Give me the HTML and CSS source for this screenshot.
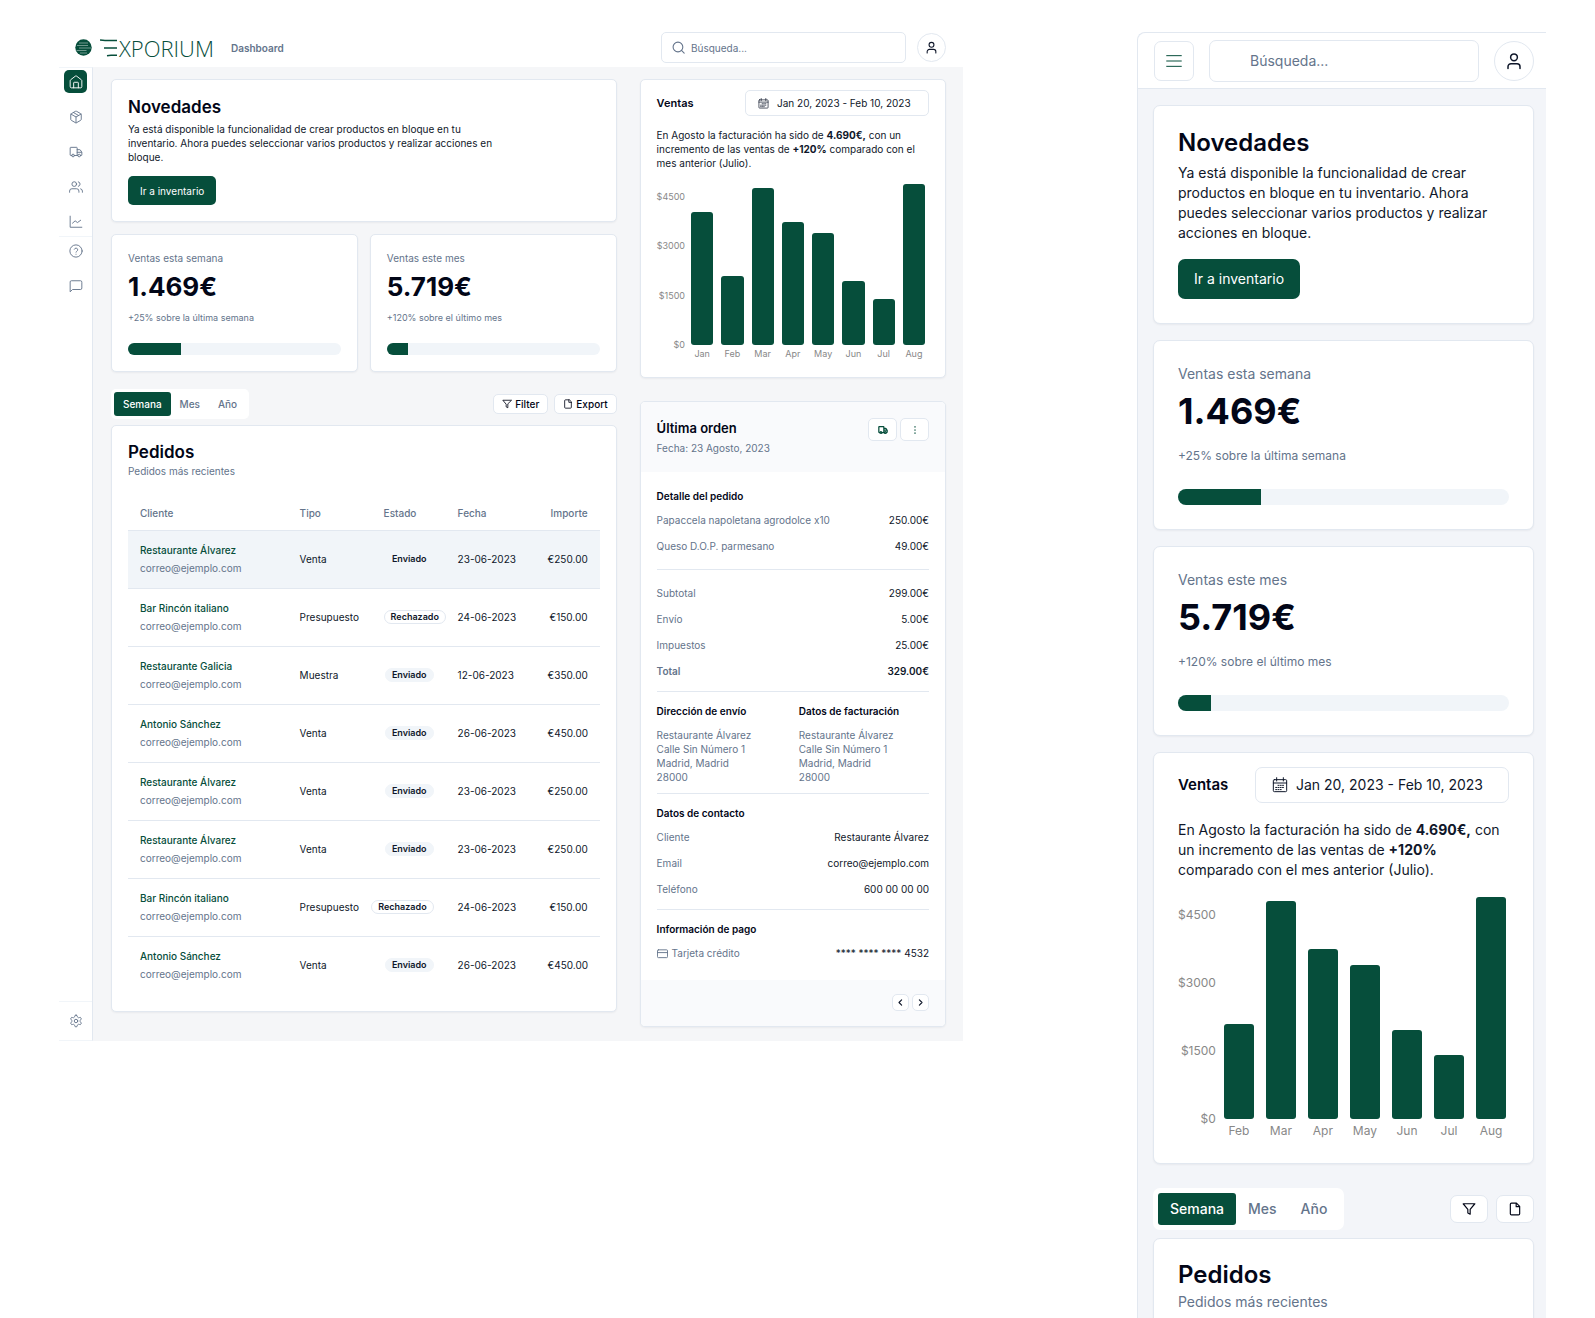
FILE: index.html
```html
<!DOCTYPE html>
<html lang="es">
<head>
<meta charset="utf-8">
<meta name="viewport" content="width=device-width, initial-scale=1">
<title>Exporium – Dashboard</title>
<link rel="stylesheet" href="styles.css">
</head>
<body>
<svg class="sprite" aria-hidden="true">
  <symbol id="i-home" viewBox="0 0 24 24"><path d="M2 9.800a2 2 0 0 1 .8-1.600l8-6.200a2 2 0 0 1 2.400 0l8 6.200a2 2 0 0 1 .8 1.600V20a2 2 0 0 1-2 2H4a2 2 0 0 1-2-2z"/><path d="M8 22v-8.500a1 1 0 0 1 1-1h6a1 1 0 0 1 1 1V22"/></symbol>
  <symbol id="i-box" viewBox="0 0 24 24"><path d="M21 8a2 2 0 0 0-1-1.730l-7-4a2 2 0 0 0-2 0l-7 4A2 2 0 0 0 3 8v8a2 2 0 0 0 1 1.730l7 4a2 2 0 0 0 2 0l7-4A2 2 0 0 0 21 16z"/><path d="M3.300 7 12 12l8.700-5M12 22V12M7.500 4.270l9 5.150"/></symbol>
  <symbol id="i-truck" viewBox="0 0 24 24"><path d="M5 18H3a1 1 0 0 1-1-1V5a1 1 0 0 1 1-1h10a1 1 0 0 1 1 1v12M14 8h4.500a1 1 0 0 1 .8.4l2.500 3.700a1 1 0 0 1 .2.600V17a1 1 0 0 1-1 1h-1M9.500 18h5.500M14 12.500h7.500"/><circle cx="7" cy="18" r="2.300"/><circle cx="17.500" cy="18" r="2.300"/></symbol>
  <symbol id="i-users" viewBox="0 0 24 24"><path d="M17 21v-2a4 4 0 0 0-4-4H5a4 4 0 0 0-4 4v2M23 21v-2a4 4 0 0 0-3-3.870M16 3.130a4 4 0 0 1 0 7.750"/><circle cx="9" cy="7" r="4"/></symbol>
  <symbol id="i-chart" viewBox="0 0 24 24"><path d="M2 2v19h20M6 14l4.500-4 4 3 5.500-4"/></symbol>
  <symbol id="i-help" viewBox="0 0 24 24"><circle cx="12" cy="12" r="10.500"/><path d="M9.100 9a3 3 0 0 1 5.800 1c0 2-2.900 2.600-2.900 4M12 17.500v.1"/></symbol>
  <symbol id="i-chat" viewBox="0 0 24 24"><path d="M22 16a2 2 0 0 1-2 2H6l-4 4V5a2 2 0 0 1 2-2h16a2 2 0 0 1 2 2z"/></symbol>
  <symbol id="i-gear" viewBox="0 0 24 24"><path d="M12.220 2h-.44a2 2 0 0 0-2 2v.18a2 2 0 0 1-1 1.730l-.43.25a2 2 0 0 1-2 0l-.15-.08a2 2 0 0 0-2.730.73l-.22.38a2 2 0 0 0 .73 2.730l.15.1a2 2 0 0 1 1 1.720v.51a2 2 0 0 1-1 1.740l-.15.09a2 2 0 0 0-.73 2.730l.22.38a2 2 0 0 0 2.730.73l.15-.08a2 2 0 0 1 2 0l.43.25a2 2 0 0 1 1 1.730V20a2 2 0 0 0 2 2h.44a2 2 0 0 0 2-2v-.18a2 2 0 0 1 1-1.730l.43-.25a2 2 0 0 1 2 0l.15.08a2 2 0 0 0 2.730-.73l.22-.39a2 2 0 0 0-.73-2.730l-.15-.08a2 2 0 0 1-1-1.740v-.5a2 2 0 0 1 1-1.740l.15-.09a2 2 0 0 0 .73-2.730l-.22-.38a2 2 0 0 0-2.730-.73l-.15.08a2 2 0 0 1-2 0l-.43-.25a2 2 0 0 1-1-1.730V4a2 2 0 0 0-2-2z"/><circle cx="12" cy="12" r="3"/></symbol>
  <symbol id="i-search" viewBox="0 0 24 24"><circle cx="11" cy="11" r="9"/><path d="m22.500 22.500-5-5"/></symbol>
  <symbol id="i-user" viewBox="0 0 24 24"><circle cx="12" cy="7" r="4.500"/><path d="M4 22v-2.500a4 4 0 0 1 4-4h8a4 4 0 0 1 4 4V22"/></symbol>
  <symbol id="i-calendar" viewBox="0 0 24 24"><rect x="2" y="4" width="20" height="18" rx="1.500"/><path d="M2 9h20M7 1v5M17 1v5"/><path stroke-dasharray="1.500 1.900" d="M9 12.500h10M5.500 15.700h13.500M5.500 18.900h10"/></symbol>
  <symbol id="i-filter" viewBox="0 0 24 24"><path d="M22 3H2l8 9.500V19l4 2v-8.500z"/></symbol>
  <symbol id="i-file" viewBox="0 0 24 24"><path d="M14.500 2H6a2 2 0 0 0-2 2v16a2 2 0 0 0 2 2h12a2 2 0 0 0 2-2V7.500zM14 2v6h6"/></symbol>
  <symbol id="i-dots" viewBox="0 0 24 24"><path d="M12 4v1M12 11.500v1M12 19v1"/></symbol>
  <symbol id="i-card" viewBox="0 0 24 24"><rect x="1" y="4" width="22" height="17" rx="2"/><path d="M1 10h22"/></symbol>
  <symbol id="i-left" viewBox="0 0 24 24"><path d="m15 5-7 7 7 7"/></symbol>
  <symbol id="i-right" viewBox="0 0 24 24"><path d="m9 5 7 7-7 7"/></symbol>
  <symbol id="i-menu" viewBox="0 0 24 24"><path d="M1 4h22M1 12h22M1 20h22"/></symbol>
</svg>

<div class="desktop">
  <header class="topbar">
    <a class="brand" href="#" aria-label="Exporium">
      <svg class="brand-globe" viewBox="0 0 17 17" aria-hidden="true"><circle cx="8.500" cy="8.500" r="8.200" fill="#064e3b"/><path d="M4 4h9M2 6.500h11M4 9h12M1.500 11.500h10M5 14h7" stroke="#9dbab1" stroke-width=".7" fill="none"/></svg>
      <svg class="brand-bars" viewBox="0 0 17 18" aria-hidden="true"><path d="M0 1q3 .5 5 .5h12M4 9h13M7 16.700q2-.4 4-.4h6" fill="none" stroke="#064e3b" stroke-width="1.400"/></svg>
      <span class="brand-name">XPORIUM</span>
    </a>
    <span class="page-name">Dashboard</span>
    <label class="search">
      <svg class="icon"><use href="#i-search"/></svg>
      <input type="search" placeholder="Búsqueda..." aria-label="Búsqueda">
    </label>
    <button class="avatar" aria-label="Cuenta"><svg class="icon"><use href="#i-user"/></svg></button>
  </header>

  <div class="shell">
    <nav class="sidebar" aria-label="Principal">
      <div class="nav-group">
        <a class="nav-item active" href="#" aria-label="Inicio"><svg class="icon"><use href="#i-home"/></svg></a>
        <a class="nav-item" href="#" aria-label="Inventario"><svg class="icon"><use href="#i-box"/></svg></a>
        <a class="nav-item" href="#" aria-label="Envíos"><svg class="icon"><use href="#i-truck"/></svg></a>
        <a class="nav-item" href="#" aria-label="Clientes"><svg class="icon"><use href="#i-users"/></svg></a>
        <a class="nav-item" href="#" aria-label="Informes"><svg class="icon"><use href="#i-chart"/></svg></a>
      </div>
      <div class="nav-group">
        <a class="nav-item" href="#" aria-label="Ayuda"><svg class="icon"><use href="#i-help"/></svg></a>
        <a class="nav-item" href="#" aria-label="Mensajes"><svg class="icon"><use href="#i-chat"/></svg></a>
      </div>
      <div class="nav-group nav-bottom">
        <a class="nav-item" href="#" aria-label="Ajustes"><svg class="icon"><use href="#i-gear"/></svg></a>
      </div>
    </nav>

    <main class="content">
      <div class="column">
        <section class="card news">
          <h2 class="title">Novedades</h2>
          <p class="copy">Ya está disponible la funcionalidad de crear productos en bloque en tu inventario. Ahora puedes seleccionar varios productos y realizar acciones en bloque.</p>
          <button class="primary">Ir a inventario</button>
        </section>

        <div class="stats">
          <section class="card stat">
            <h3 class="stat-label">Ventas esta semana</h3>
            <p class="stat-value">1.469€</p>
            <p class="stat-note">+25% sobre la última semana</p>
            <div class="meter" role="progressbar" aria-valuenow="25"><div class="meter-fill" style="width:25%"></div></div>
          </section>
          <section class="card stat">
            <h3 class="stat-label">Ventas este mes</h3>
            <p class="stat-value">5.719€</p>
            <p class="stat-note">+120% sobre el último mes</p>
            <div class="meter" role="progressbar" aria-valuenow="10"><div class="meter-fill" style="width:10%"></div></div>
          </section>
        </div>

        <div class="toolbar">
          <div class="tabs" role="tablist">
            <button class="tab active" role="tab">Semana</button>
            <button class="tab" role="tab">Mes</button>
            <button class="tab" role="tab">Año</button>
          </div>
          <div class="tools">
            <button class="tool"><svg class="icon"><use href="#i-filter"/></svg>Filter</button>
            <button class="tool"><svg class="icon"><use href="#i-file"/></svg>Export</button>
          </div>
        </div>

        <section class="card orders">
          <h2 class="title">Pedidos</h2>
          <p class="subtitle">Pedidos más recientes</p>
          <table class="table">
            <thead><tr><th>Cliente</th><th class="col-type">Tipo</th><th class="col-state">Estado</th><th class="col-date">Fecha</th><th class="col-amount">Importe</th></tr></thead>
            <tbody>
              <tr class="selected"><td><a class="client" href="#">Restaurante Álvarez</a><span class="mail">correo@ejemplo.com</span></td><td>Venta</td><td><div class="state"><span class="badge">Enviado</span></div></td><td>23-06-2023</td><td class="amount">€250.00</td></tr>
              <tr><td><a class="client" href="#">Bar Rincón italiano</a><span class="mail">correo@ejemplo.com</span></td><td>Presupuesto</td><td><div class="state state-start"><span class="badge outline">Rechazado</span></div></td><td>24-06-2023</td><td class="amount">€150.00</td></tr>
              <tr><td><a class="client" href="#">Restaurante Galicia</a><span class="mail">correo@ejemplo.com</span></td><td>Muestra</td><td><div class="state"><span class="badge">Enviado</span></div></td><td>12-06-2023</td><td class="amount">€350.00</td></tr>
              <tr><td><a class="client" href="#">Antonio Sánchez</a><span class="mail">correo@ejemplo.com</span></td><td>Venta</td><td><div class="state"><span class="badge">Enviado</span></div></td><td>26-06-2023</td><td class="amount">€450.00</td></tr>
              <tr><td><a class="client" href="#">Restaurante Álvarez</a><span class="mail">correo@ejemplo.com</span></td><td>Venta</td><td><div class="state"><span class="badge">Enviado</span></div></td><td>23-06-2023</td><td class="amount">€250.00</td></tr>
              <tr><td><a class="client" href="#">Restaurante Álvarez</a><span class="mail">correo@ejemplo.com</span></td><td>Venta</td><td><div class="state"><span class="badge">Enviado</span></div></td><td>23-06-2023</td><td class="amount">€250.00</td></tr>
              <tr><td><a class="client" href="#">Bar Rincón italiano</a><span class="mail">correo@ejemplo.com</span></td><td>Presupuesto</td><td><div class="state"><span class="badge outline">Rechazado</span></div></td><td>24-06-2023</td><td class="amount">€150.00</td></tr>
              <tr><td><a class="client" href="#">Antonio Sánchez</a><span class="mail">correo@ejemplo.com</span></td><td>Venta</td><td><div class="state"><span class="badge">Enviado</span></div></td><td>26-06-2023</td><td class="amount">€450.00</td></tr>
            </tbody>
          </table>
        </section>
      </div>

      <div class="column side">
        <section class="card sales">
          <div class="sales-head">
            <h2 class="sales-title">Ventas</h2>
            <button class="date"><svg class="icon"><use href="#i-calendar"/></svg>Jan 20, 2023 - Feb 10, 2023</button>
          </div>
          <p class="copy">En Agosto la facturación ha sido de <b>4.690€,</b> con un incremento de las ventas de <b>+120%</b> comparado con el mes anterior (Julio).</p>
          <div class="chart">
            <div class="axis"><span>$4500</span><span>$3000</span><span>$1500</span><span>$0</span></div>
            <div class="bars">
              <div class="bar" style="height:81%"></div>
              <div class="bar" style="height:42%"></div>
              <div class="bar" style="height:96%"></div>
              <div class="bar" style="height:75%"></div>
              <div class="bar" style="height:68%"></div>
              <div class="bar" style="height:39%"></div>
              <div class="bar" style="height:28%"></div>
              <div class="bar" style="height:98%"></div>
            </div>
            <div class="months"><span>Jan</span><span>Feb</span><span>Mar</span><span>Apr</span><span>May</span><span>Jun</span><span>Jul</span><span>Aug</span></div>
          </div>
        </section>

        <section class="card order">
          <header class="order-head">
            <div>
              <h2 class="order-title">Última orden</h2>
              <p class="subtitle">Fecha: 23 Agosto, 2023</p>
            </div>
            <div class="order-actions">
              <button class="mini" aria-label="Envío"><svg class="icon"><use href="#i-truck"/></svg></button>
              <button class="mini" aria-label="Más"><svg class="icon"><use href="#i-dots"/></svg></button>
            </div>
          </header>
          <div class="order-body">
            <section class="block block-items">
              <h3>Detalle del pedido</h3>
              <dl class="lines">
                <div><dt>Papaccela napoletana agrodolce x10</dt><dd>250.00€</dd></div>
                <div><dt>Queso D.O.P. parmesano</dt><dd>49.00€</dd></div>
              </dl>
            </section>
            <section class="block block-totals">
              <dl class="lines">
                <div><dt>Subtotal</dt><dd>299.00€</dd></div>
                <div><dt>Envío</dt><dd>5.00€</dd></div>
                <div><dt>Impuestos</dt><dd>25.00€</dd></div>
                <div class="total"><dt>Total</dt><dd>329.00€</dd></div>
              </dl>
            </section>
            <section class="block block-address">
              <div>
                <h3>Dirección de envío</h3>
                <address>Restaurante Álvarez<br>Calle Sin Número 1<br>Madrid, Madrid<br>28000</address>
              </div>
              <div>
                <h3>Datos de facturación</h3>
                <address>Restaurante Álvarez<br>Calle Sin Número 1<br>Madrid, Madrid<br>28000</address>
              </div>
            </section>
            <section class="block">
              <h3>Datos de contacto</h3>
              <dl class="lines">
                <div><dt>Cliente</dt><dd>Restaurante Álvarez</dd></div>
                <div><dt>Email</dt><dd>correo@ejemplo.com</dd></div>
                <div><dt>Teléfono</dt><dd>600 00 00 00</dd></div>
              </dl>
            </section>
            <section class="block">
              <h3>Información de pago</h3>
              <dl class="lines">
                <div><dt class="pay"><svg class="icon"><use href="#i-card"/></svg>Tarjeta crédito</dt><dd>**** **** **** 4532</dd></div>
              </dl>
            </section>
          </div>
          <footer class="order-foot">
            <button class="pager" aria-label="Anterior"><svg class="icon"><use href="#i-left"/></svg></button>
            <button class="pager" aria-label="Siguiente"><svg class="icon"><use href="#i-right"/></svg></button>
          </footer>
        </section>
      </div>
    </main>
  </div>
</div>

<div class="mobile">
  <header class="topbar">
    <button class="menu" aria-label="Menú"><svg class="icon"><use href="#i-menu"/></svg></button>
    <label class="search"><input type="search" placeholder="Búsqueda..." aria-label="Búsqueda"></label>
    <button class="avatar" aria-label="Cuenta"><svg class="icon"><use href="#i-user"/></svg></button>
  </header>
  <main class="feed">
    <section class="card news">
      <h2 class="title">Novedades</h2>
      <p class="copy">Ya está disponible la funcionalidad de crear productos en bloque en tu inventario. Ahora puedes seleccionar varios productos y realizar acciones en bloque.</p>
      <button class="primary">Ir a inventario</button>
    </section>
    <section class="card stat">
      <h3 class="stat-label">Ventas esta semana</h3>
      <p class="stat-value">1.469€</p>
      <p class="stat-note">+25% sobre la última semana</p>
      <div class="meter" role="progressbar" aria-valuenow="25"><div class="meter-fill" style="width:25%"></div></div>
    </section>
    <section class="card stat">
      <h3 class="stat-label">Ventas este mes</h3>
      <p class="stat-value">5.719€</p>
      <p class="stat-note">+120% sobre el último mes</p>
      <div class="meter" role="progressbar" aria-valuenow="10"><div class="meter-fill" style="width:10%"></div></div>
    </section>
    <section class="card sales">
      <div class="sales-head">
        <h2 class="sales-title">Ventas</h2>
        <button class="date"><svg class="icon"><use href="#i-calendar"/></svg>Jan 20, 2023 - Feb 10, 2023</button>
      </div>
      <p class="copy">En Agosto la facturación ha sido de <b>4.690€,</b> con un incremento de las ventas de <b>+120%</b> comparado con el mes anterior (Julio).</p>
      <div class="chart">
        <div class="axis"><span>$4500</span><span>$3000</span><span>$1500</span><span>$0</span></div>
        <div class="bars">
          <div class="bar" style="height:42%"></div>
          <div class="bar" style="height:96%"></div>
          <div class="bar" style="height:75%"></div>
          <div class="bar" style="height:68%"></div>
          <div class="bar" style="height:39%"></div>
          <div class="bar" style="height:28%"></div>
          <div class="bar" style="height:98%"></div>
        </div>
        <div class="months"><span>Feb</span><span>Mar</span><span>Apr</span><span>May</span><span>Jun</span><span>Jul</span><span>Aug</span></div>
      </div>
    </section>
    <div class="toolbar">
      <div class="tabs" role="tablist">
        <button class="tab active" role="tab">Semana</button>
        <button class="tab" role="tab">Mes</button>
        <button class="tab" role="tab">Año</button>
      </div>
      <div class="tools">
        <button class="tool" aria-label="Filter"><svg class="icon"><use href="#i-filter"/></svg></button>
        <button class="tool" aria-label="Export"><svg class="icon"><use href="#i-file"/></svg></button>
      </div>
    </div>
    <section class="card orders">
      <h2 class="title">Pedidos</h2>
      <p class="subtitle">Pedidos más recientes</p>
    </section>
  </main>
</div>
</body>
</html>
```
FILE: styles.css
```css
* { box-sizing: border-box; margin: 0; padding: 0; }

:root {
  --green: #064e3b;
  --ink: #020617;
  --text: #0f172a;
  --muted: #64748b;
  --line: #e2e8f0;
  --soft: #f1f5f9;
}

body {
  display: grid;
  grid-template-columns: minmax(0, 904fr) minmax(0, 409fr);
  column-gap: 174px;
  align-items: start;
  height: 100vh;
  overflow: hidden;
  padding: 32px 49px 0 59px;
  background: #fff;
  color: var(--text);
  font-family: Inter, "Liberation Sans", sans-serif;
}

button, input { font: inherit; color: inherit; }
button { background: #fff; border: 1px solid var(--line); cursor: pointer; }
a { color: inherit; text-decoration: none; }
.sprite { display: none; }
.icon {
  width: var(--icon);
  height: var(--icon);
  flex: none;
  fill: none;
  stroke: currentColor;
  stroke-width: 2;
  stroke-linecap: round;
  stroke-linejoin: round;
}

/* Size scales of the two layouts */
.desktop {
  --body: 10px; --body-line: 14px;
  --small: 9px; --small-line: 12px;
  --title: 17px; --title-line: 24px;
  --value: 26px; --value-line: 28px;
  --pad: 16px; --pad-top: 15px; --radius: 5px;
  --control: 29px; --control-pad: 12px;
  --icon: 11px;
  --avatar: 29px;
  --value-top: 8px; --note-top: 11px; --meter-top: 19px; --meter: 12px;
  --date: 184px; --date-height: 26px; --sales-top: 10px; --sales-gap: 12px; --sales-bottom: 17px;
  --plot: 164px; --plot-top: 11px; --bar-gap: 8px; --axis-gap: 6px; --tick-top: 10px; --tick-bottom: -6px;
  --months-top: 3px; --plot-right: 4px;
  --tab: 24px; --tab-pad: 9px; --tabs-pad: 3px; --tool: 20px; --tool-pad: 8px; --tool-gap: 6px;
}
.mobile {
  --body: 14px; --body-line: 20px;
  --small: 12px; --small-line: 16px;
  --title: 24px; --title-line: 32px;
  --value: 36px; --value-line: 40px;
  --pad: 24px; --pad-top: 21px; --radius: 7px;
  --control: 40px; --control-pad: 16px;
  --icon: 16px;
  --avatar: 40px;
  --value-top: 7px; --note-top: 17px; --meter-top: 25px; --meter: 16px;
  --date: 254px; --date-height: 36px; --sales-top: 14px; --sales-gap: 17px; --sales-bottom: 24px;
  --plot: 227px; --plot-top: 12px; --bar-gap: 12px; --axis-gap: 8px; --tick-top: 15px; --tick-bottom: -8px;
  --months-top: 4px; --plot-right: 3px;
  --tab: 32px; --tab-pad: 12px; --tabs-pad: 5px; --tool: 28px; --tool-pad: 11px; --tool-gap: 8px;
}
.desktop, .mobile { font-size: var(--body); line-height: var(--body-line); }

/* Top bar */
.topbar { display: flex; align-items: center; background: #fff; }
.search {
  display: flex;
  align-items: center;
  min-width: 0;
  border: 1px solid var(--line);
  border-radius: var(--radius);
  color: var(--muted);
}
.search input { flex: 1; min-width: 0; border: 0; outline: 0; background: none; }
.search input::placeholder { color: var(--muted); opacity: 1; }
.avatar {
  display: grid;
  flex: none;
  place-items: center;
  width: var(--avatar);
  height: var(--avatar);
  border-radius: 50%;
}

.desktop .topbar { padding: 0 17px 4px 16px; }
.brand { display: flex; align-items: center; color: var(--green); }
.brand-globe { width: 17px; height: 17px; margin-right: 8px; }
.brand-bars { width: 17px; height: 18px; margin-right: 2px; }
.brand-name { font: 300 22px/30px "Open Sans", sans-serif; }
.page-name { margin-left: 17px; color: var(--muted); font-weight: 600; }
.desktop .search {
  --icon: 13px;
  width: 245px;
  height: 31px;
  margin-left: auto;
  padding: 0 10px;
  gap: 6px;
}
.desktop .avatar { --icon: 13px; margin-left: 11px; }

.mobile .topbar { padding: 7px 12px 6px 16px; border-bottom: 1px solid var(--line); }
.menu {
  display: grid;
  flex: none;
  place-items: center;
  width: 40px;
  height: 40px;
  border-radius: var(--radius);
  color: var(--green);
}
.mobile .search { flex: 1; height: 42px; margin: 0 15px; padding: 0 16px 0 40px; }
.mobile .avatar { --icon: 18px; }

/* Desktop shell */
.shell { display: flex; }
.sidebar {
  display: flex;
  flex-direction: column;
  flex: none;
  width: 34px;
  border: solid var(--soft);
  border-width: 1px 1px 1px 0;
  border-right-color: var(--line);
}
.nav-group {
  display: flex;
  flex-direction: column;
  align-items: center;
  gap: 12px;
  padding: 2px 0 3px;
}
.nav-group + .nav-group { border-top: 1px solid var(--soft); }
.sidebar .nav-bottom { margin-top: auto; padding: 7px 0 8px; }
.nav-item {
  --icon: 14px;
  display: grid;
  place-items: center;
  width: 23px;
  height: 23px;
  border-radius: var(--radius);
  color: var(--muted);
}
.nav-item .icon { stroke-width: 1.600; }
.nav-item.active { background: var(--green); color: #fff; }
.content {
  flex: 1;
  display: grid;
  grid-template-columns: minmax(0, 505fr) minmax(0, 306fr);
  column-gap: 23px;
  align-items: start;
  padding: 12px 17px 14px 18px;
  background: #f5f6f8;
}
.column { display: flex; flex-direction: column; gap: 12px; }
.side { gap: 23px; }
.stats { display: grid; grid-template-columns: 1fr 1fr; gap: 12px; }

/* Mobile frame */
.mobile {
  border: solid var(--line);
  border-width: 1px 0 0 1px;
  border-radius: 8px 0 0 0;
  background: #f3f5f9;
}
.mobile .topbar { border-top-left-radius: 8px; }
.feed { display: flex; flex-direction: column; gap: 16px; padding: 16px 12px 0 15px; }
.mobile .orders { min-height: 320px; }

/* Cards */
.card {
  padding: var(--pad-top) var(--pad) var(--pad);
  border: 1px solid var(--line);
  border-radius: var(--radius);
  background: #fff;
  box-shadow: 0 1px 2px rgba(15, 23, 42, .05);
}
.title { font-size: var(--title); line-height: var(--title-line); font-weight: 600; color: var(--ink); }
.subtitle { color: var(--muted); }
.copy b { font-weight: 700; }
.news .title { margin-bottom: 3px; }
.mobile .news .title { margin-bottom: 4px; }
.news .copy { max-width: 384px; }
.primary {
  height: var(--control);
  margin-top: 12px;
  padding: 0 var(--control-pad);
  border: 0;
  border-radius: var(--radius);
  background: var(--green);
  color: #fff;
}
.mobile .primary { margin-top: 16px; }

.stat-label { padding-top: 1px; color: var(--muted); font-size: var(--body); font-weight: 400; }
.mobile .stat-label { padding-top: 2px; }
.stat-value {
  margin-top: var(--value-top);
  color: var(--ink);
  font-size: var(--value);
  line-height: var(--value-line);
  font-weight: 700;
}
.stat-note { margin-top: var(--note-top); color: var(--muted); font-size: var(--small); line-height: var(--small-line); }
.meter { height: var(--meter); margin-top: var(--meter-top); border-radius: 8px; overflow: hidden; background: var(--soft); }
.meter-fill { height: 100%; background: var(--green); }

/* Sales chart */
.sales { padding: var(--sales-top) var(--pad) var(--sales-bottom); }
.sales-head { display: flex; align-items: center; justify-content: space-between; margin-bottom: var(--sales-gap); }
.sales-title { font-size: 11px; font-weight: 600; color: var(--ink); }
.mobile .sales-title { font-size: 15px; }
.date {
  display: flex;
  align-items: center;
  gap: 8px;
  width: var(--date);
  height: var(--date-height);
  padding: 0 var(--control-pad);
  border-radius: var(--radius);
}
.date .icon { stroke-width: 1.500; }
.chart {
  display: grid;
  grid-template-columns: auto 1fr;
  column-gap: var(--axis-gap);
  margin-top: var(--plot-top);
  padding-right: var(--plot-right);
  color: #888;
  font-size: var(--small);
  line-height: var(--small-line);
}
.axis {
  display: flex;
  flex-direction: column;
  justify-content: space-between;
  margin: var(--tick-top) 0 var(--tick-bottom);
  text-align: right;
}
.bars { display: flex; align-items: flex-end; gap: var(--bar-gap); height: var(--plot); }
.bar { flex: 1; border-radius: 3px; background: var(--green); }
.months { grid-column: 2; display: flex; gap: var(--bar-gap); margin-top: var(--months-top); }
.months span { flex: 1 1 0; width: 0; text-align: center; }

/* Tabs and tools */
.toolbar { display: flex; align-items: center; justify-content: space-between; }
.desktop .toolbar { margin: 5px 0 -6px; }
.mobile .toolbar { margin: 8px 0 -8px; }
.tabs { display: flex; padding: var(--tabs-pad); border-radius: var(--radius); background: #fff; }
.tab {
  height: var(--tab);
  padding: 0 var(--tab-pad);
  border: 0;
  border-radius: 3px;
  color: var(--muted);
  font-weight: 500;
}
.tab.active { background: var(--green); color: #fff; }
.tools { display: flex; gap: var(--tool-gap); }
.tool {
  --icon: 10px;
  display: flex;
  align-items: center;
  gap: 3px;
  height: var(--tool);
  padding: 0 var(--tool-pad);
  border-radius: var(--radius);
  font-weight: 500;
  color: var(--ink);
}
.mobile .tool { --icon: 14px; }

/* Orders table */
.desktop .orders { padding-top: 14px; padding-bottom: 17px; }
.mobile .orders { padding-top: 20px; }
.mobile .subtitle { margin-top: 1px; }
.table { width: 100%; margin-top: 18px; border-collapse: collapse; table-layout: fixed; }
.table th { height: 34px; padding: 0 12px; color: var(--muted); font-weight: 500; text-align: left; }
.table td { height: 58px; padding: 0 12px; white-space: nowrap; }
.table tr { border-bottom: 1px solid var(--line); }
.table tbody tr:last-child { border-bottom: 0; }
.table .selected { background: var(--soft); }
.col-type { width: 84px; }
.col-state { width: 74px; }
.col-date { width: 90px; }
.col-amount { width: 64px; }
.table .col-amount, .amount { text-align: right; }
.client { display: block; margin-bottom: 4px; color: var(--green); font-weight: 500; }
.mail { display: block; color: var(--muted); }
.state { display: flex; justify-content: flex-end; }
.state-start { justify-content: flex-start; }
.badge {
  padding: 0 6px;
  border: 1px solid var(--soft);
  border-radius: 8px;
  background: var(--soft);
  font-size: var(--small);
  line-height: var(--small-line);
  font-weight: 600;
}
.badge.outline { border-color: var(--line); background: #fff; }

/* Last order */
.order { padding: 0; overflow: hidden; }
.order-head { display: flex; justify-content: space-between; align-items: flex-start; padding: 16px 16px 17px; background: #f9fafc; }
.order-title { margin-bottom: 3px; font-size: 13px; line-height: 20px; font-weight: 600; color: var(--ink); }
.order-actions { display: flex; gap: 3px; }
.mini {
  --icon: 10px;
  display: grid;
  place-items: center;
  width: 29px;
  height: 23px;
  border-radius: var(--radius);
  color: var(--green);
}
.mini .icon { stroke-width: 3; }
.order-body { padding: 5px 16px 7px; }
.block { padding: 12px 0 13px; }
.block + .block { border-top: 1px solid var(--line); }
.block-items { padding-bottom: 16px; }
.block-totals { padding-top: 16px; }
.block-address { display: grid; grid-template-columns: 142fr 130fr; padding-bottom: 9px; }
.block h3 { margin-bottom: 10px; font-size: var(--body); font-weight: 600; color: var(--ink); }
.lines { display: flex; flex-direction: column; gap: 12px; }
.lines div { display: flex; justify-content: space-between; }
.lines dt, address { color: var(--muted); font-style: normal; }
.total { font-weight: 600; }
.pay { display: flex; align-items: center; gap: 4px; }
.order-foot { display: flex; justify-content: flex-end; gap: 3px; padding: 14px 16px 15px; background: #f9fafc; }
.pager {
  --icon: 9px;
  display: grid;
  place-items: center;
  width: 17px;
  height: 17px;
  border-radius: var(--radius);
}
.pager .icon { stroke-width: 3; }
.menu .icon { stroke-width: 1.500; }
```
